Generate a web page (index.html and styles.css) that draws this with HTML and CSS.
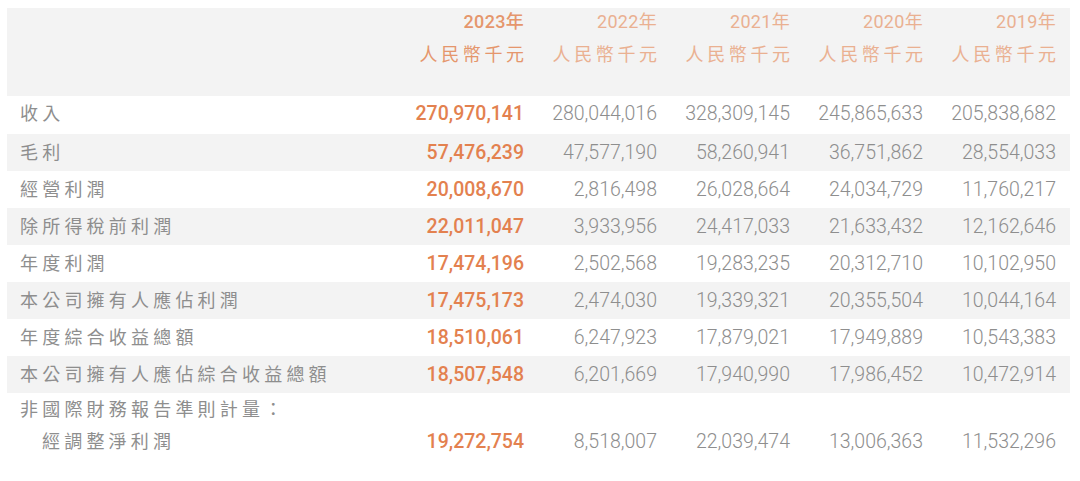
FILE: index.html
```html
<!DOCTYPE html>
<html lang="zh-Hant">
<head>
<meta charset="utf-8">
<link rel="stylesheet" href="styles.css">
</head>
<body>
<div class="table">
  <div class="row head">
    <div class="label"></div>
    <div class="cell hl"><span class="yr">2023年</span><span class="cur">人民幣千元</span></div>
    <div class="cell"><span class="yr">2022年</span><span class="cur">人民幣千元</span></div>
    <div class="cell"><span class="yr">2021年</span><span class="cur">人民幣千元</span></div>
    <div class="cell"><span class="yr">2020年</span><span class="cur">人民幣千元</span></div>
    <div class="cell"><span class="yr">2019年</span><span class="cur">人民幣千元</span></div>
  </div>
  <div class="row">
    <div class="label">收入</div>
    <div class="num hl">270,970,141</div><div class="num">280,044,016</div><div class="num">328,309,145</div><div class="num">245,865,633</div><div class="num">205,838,682</div>
  </div>
  <div class="row alt">
    <div class="label">毛利</div>
    <div class="num hl">57,476,239</div><div class="num">47,577,190</div><div class="num">58,260,941</div><div class="num">36,751,862</div><div class="num">28,554,033</div>
  </div>
  <div class="row">
    <div class="label">經營利潤</div>
    <div class="num hl">20,008,670</div><div class="num">2,816,498</div><div class="num">26,028,664</div><div class="num">24,034,729</div><div class="num">11,760,217</div>
  </div>
  <div class="row alt">
    <div class="label">除所得稅前利潤</div>
    <div class="num hl">22,011,047</div><div class="num">3,933,956</div><div class="num">24,417,033</div><div class="num">21,633,432</div><div class="num">12,162,646</div>
  </div>
  <div class="row">
    <div class="label">年度利潤</div>
    <div class="num hl">17,474,196</div><div class="num">2,502,568</div><div class="num">19,283,235</div><div class="num">20,312,710</div><div class="num">10,102,950</div>
  </div>
  <div class="row alt">
    <div class="label">本公司擁有人應佔利潤</div>
    <div class="num hl">17,475,173</div><div class="num">2,474,030</div><div class="num">19,339,321</div><div class="num">20,355,504</div><div class="num">10,044,164</div>
  </div>
  <div class="row">
    <div class="label">年度綜合收益總額</div>
    <div class="num hl">18,510,061</div><div class="num">6,247,923</div><div class="num">17,879,021</div><div class="num">17,949,889</div><div class="num">10,543,383</div>
  </div>
  <div class="row alt">
    <div class="label">本公司擁有人應佔綜合收益總額</div>
    <div class="num hl">18,507,548</div><div class="num">6,201,669</div><div class="num">17,940,990</div><div class="num">17,986,452</div><div class="num">10,472,914</div>
  </div>
  <div class="row sub-head">
    <div class="label">非國際財務報告準則計量：</div>
  </div>
  <div class="row sub">
    <div class="label indent">經調整淨利潤</div>
    <div class="num hl">19,272,754</div><div class="num">8,518,007</div><div class="num">22,039,474</div><div class="num">13,006,363</div><div class="num">11,532,296</div>
  </div>
</div>
</body>
</html>
```
FILE: styles.css
```css
html, body {
  margin: 0;
  padding: 0;
  background: #ffffff;
}
body {
  padding: 8px 10px 0 7px;
}
.table {
  width: 1063px;
}
.row {
  display: grid;
  grid-template-columns: 1fr repeat(5, 133px);
  align-items: center;
  height: 37px;
  padding: 0 14px 0 13px;
}
.row.alt {
  background: #f3f3f3;
}
.row.head {
  background: #f3f3f3;
  height: 88px;
  align-items: start;
}
.row.head + .row {
  height: 38px;
  padding-bottom: 3px;
  box-sizing: border-box;
}
.cell {
  display: flex;
  flex-direction: column;
  align-items: flex-end;
  color: #eab091;
}
.cell.hl {
  color: #e5966c;
}
.yr {
  font-family: "Roboto", "Noto Sans CJK TC", sans-serif;
  font-size: 18px;
  line-height: 28px;
  letter-spacing: 0.3px;
}
.cell.hl .yr {
  font-weight: 500;
}
.cur {
  font-family: "Noto Sans CJK TC", sans-serif;
  font-size: 18px;
  line-height: 28px;
  margin-top: 3px;
  letter-spacing: 3.6px;
  margin-right: -3.6px;
}
.label {
  font-family: "Noto Sans CJK TC", sans-serif;
  font-size: 18px;
  line-height: 24px;
  color: #8e8e8e;
  letter-spacing: 4.2px;
  white-space: nowrap;
  font-weight: 400;
  padding-bottom: 3px;
}
.num {
  font-family: "Roboto", sans-serif;
  font-size: 19.5px;
  color: #8e8e8e;
  text-align: right;
  font-weight: 300;
}
.num.hl {
  color: #e3814f;
  font-weight: 500;
}
.row.sub-head {
  height: 32px;
}
.row.sub {
  height: 32px;
}
.indent {
  padding-left: 22px;
}
```
